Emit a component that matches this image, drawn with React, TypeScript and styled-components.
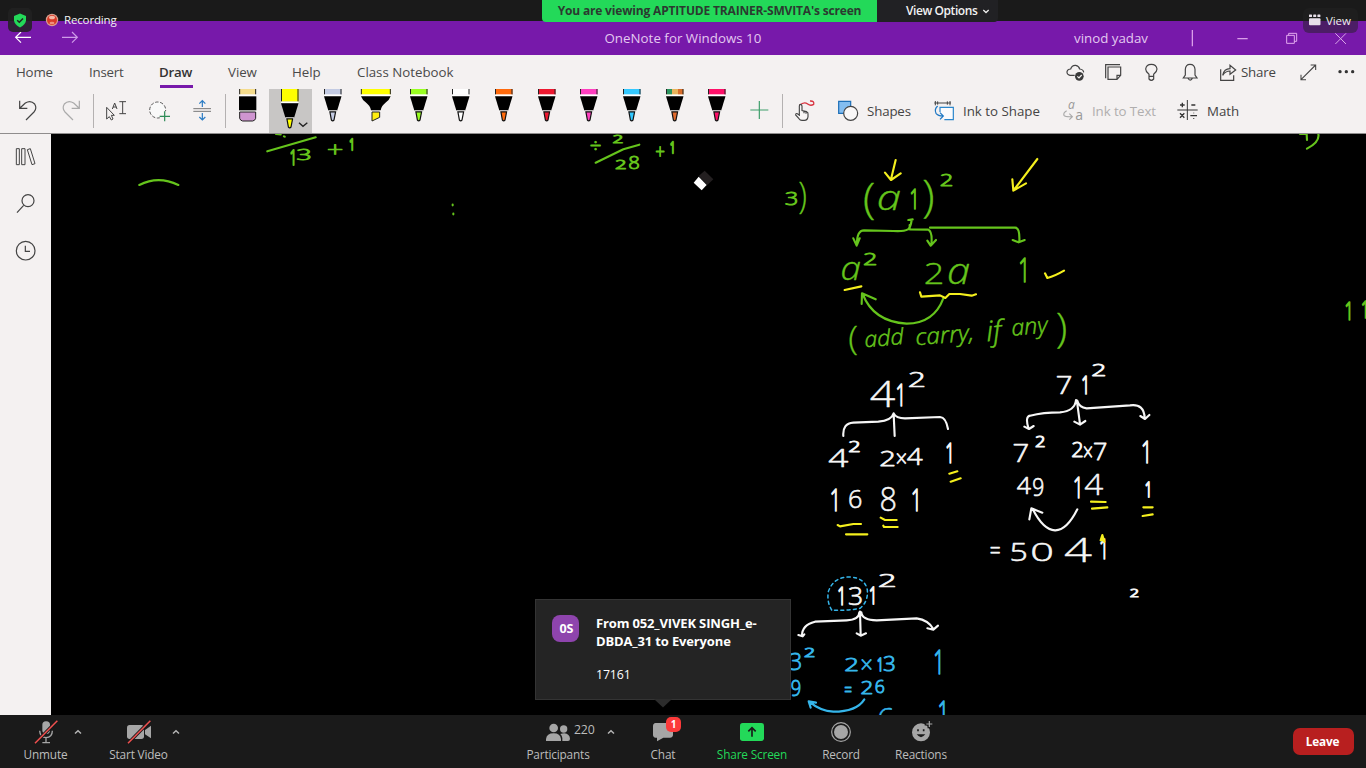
import React from 'react';
import styled, { createGlobalStyle } from 'styled-components';

const Global = createGlobalStyle`
  * { box-sizing: border-box; }
  body { margin: 0; background: #000; font-family: "Open Sans", "Noto Sans", sans-serif; }
  svg { display: block; flex: none; }
`;

const Screen = styled.div`
  position: relative;
  width: 1366px;
  height: 768px;
  overflow: hidden;
  display: flex;
  flex-direction: column;
  background: #000;
`;

/* ---------- shared pieces ---------- */

const Text = styled.span<{ $size?: number; $ls?: number; $color?: string; $weight?: number; $ml?: number; $w?: number }>`
  flex: none;
  white-space: nowrap;
  font-size: ${p => p.$size ?? 13.3}px;
  letter-spacing: ${p => p.$ls ?? 0}px;
  color: ${p => p.$color ?? '#444'};
  font-weight: ${p => p.$weight ?? 400};
  margin-left: ${p => p.$ml ?? 0}px;
  width: ${p => (p.$w ? `${p.$w}px` : 'auto')};
`;

const Pic = styled.svg<{ $ml?: number }>`
  margin-left: ${p => p.$ml ?? 0}px;
  fill: none;
  stroke: #444;
  stroke-width: 3.6;
`;

type DrawingProps = {
  x: number; y: number; w: number; h: number; ox?: number; ml?: number; stroke?: string;
  children?: React.ReactNode;
};

/* Icons are drawn on a grid of thirds of a pixel. */
const Drawing = ({ x, y, w, h, ox = 0, ml, stroke, children }: DrawingProps) => (
  <Pic $ml={ml} width={w} height={h} viewBox={`${(x - ox) * 3} ${y * 3} ${w * 3} ${h * 3}`} style={stroke ? { stroke } : undefined}>
    {children}
  </Pic>
);

/* ---------- top bars ---------- */

const MeetingStrip = styled.div`
  flex: none;
  height: 21px;
  background: #1a1a1a;
`;

const Banner = styled.div`
  position: absolute;
  top: 0;
  left: 542px;
  height: 22px;
  display: flex;
  border-radius: 0 0 4px 4px;
  overflow: hidden;
`;

const BannerMessage = styled.div`
  width: 335px;
  background: #23d959;
  color: #2b3a30;
  font-size: 12px;
  font-weight: 700;
  line-height: 21px;
  text-align: center;
  white-space: nowrap;
  letter-spacing: -0.17px;
`;

const BannerOptions = styled.div`
  width: 121px;
  background: #212124;
  color: #f2f2f2;
  font-size: 12px;
  font-weight: 600;
  line-height: 21px;
  display: flex;
  align-items: center;
  padding: 0 0 1px 29px;
  letter-spacing: -0.42px;
  white-space: nowrap;
`;

const ShieldBadge = styled.div`
  position: absolute;
  left: 8px;
  top: 8px;
  width: 24px;
  height: 24px;
  border-radius: 5px;
  background: rgba(34, 34, 34, 0.86);
  display: flex;
  align-items: center;
  justify-content: center;
`;

const Recording = styled.div`
  position: absolute;
  left: 45px;
  top: 12px;
  height: 16px;
  display: flex;
  align-items: center;
  gap: 5px;
  color: #f3f3f3;
  font-size: 11.5px;
  letter-spacing: -0.15px;
  line-height: 16px;
`;

const ViewBadge = styled.div`
  position: absolute;
  left: 1303px;
  top: 8px;
  width: 55px;
  height: 25px;
  border-radius: 6px;
  background: rgba(34, 34, 34, 0.5);
  display: flex;
  align-items: center;
  padding: 0 0 1px 6px;
  gap: 5px;
  color: #eee;
  font-size: 11.5px;
  letter-spacing: -0.1px;
`;

const TitleBar = styled.div`
  flex: none;
  height: 34px;
  background: #7719aa;
  display: flex;
  align-items: center;
`;

const TabRow = styled.div`
  flex: none;
  height: 34px;
  padding-left: 16px;
  background: #f4f1f1;
  display: flex;
  align-items: center;
`;

const Tab = styled.div<{ $w: number; $active?: boolean; $ls?: number }>`
  flex: none;
  height: 34px;
  width: ${p => p.$w}px;
  line-height: 34px;
  font-size: 13.3px;
  letter-spacing: ${p => p.$ls ?? -0.2}px;
  white-space: nowrap;
  color: ${p => (p.$active ? '#333' : '#4a4a4a')};
  font-weight: ${p => (p.$active ? 600 : 400)};
  background: ${p => (p.$active ? 'linear-gradient(#7719aa, #7719aa) 1px 30px / 33px 3px no-repeat' : 'none')};
`;

const Ribbon = styled.div`
  flex: none;
  height: 45px;
  background: #f4f1f1;
  border-bottom: 1px solid #8f8d8d;
  display: flex;
  align-items: center;
`;

const Divider = styled.div<{ $ml: number }>`
  flex: none;
  width: 1px;
  height: 34px;
  margin-left: ${p => p.$ml}px;
  background: #b4b1b1;
`;

const SelectedPen = styled.div`
  flex: none;
  width: 43px;
  height: 44px;
  margin-left: 11px;
  padding-left: 12px;
  background: #c8c6c5;
  display: flex;
`;

const PenTray = styled.div`
  flex: none;
  width: 317px;
  margin-left: 18.500px;
  margin-right: 0.500px;
  display: flex;
  justify-content: space-between;
`;

type PenProps = { color: string; tip?: string; drop?: number; ml?: number; children?: React.ReactNode };

const Pen = ({ color, tip, drop = 0, ml, children }: PenProps) => (
  <Pic $ml={ml} width={18} height={44} viewBox="0 0 18 44" style={{ stroke: 'none' }}>
    <rect x="0" y="0" width="17.5" height={5.5 + drop} fill={color} />
    {children}
    <path d={`M.5 0V${5.5 + drop}M17 0V${5.5 + drop}`} stroke="#222" strokeWidth="1" />
    <rect x="0" y={5.6 + drop} width="17.5" height="1.4" fill="#fff" />
    <g transform={`translate(0 ${drop})`}>
      <path d="M0 7.2H17.5L13.2 21.4H4.3Z" fill="#000" />
      <path d="M4.5 21.5H13V22.5H4.5Z" fill="#fff" />
      <path d="M5.9 22.8L7.4 31Q8.7 32.6 10 31L11.6 22.8Z" fill={tip ?? color} stroke="#111" strokeWidth="1.2" />
    </g>
  </Pic>
);

/* ---------- note area ---------- */

const Body = styled.div`
  flex: none;
  height: 581px;
  display: flex;
`;

const SideRail = styled.div`
  flex: none;
  width: 51px;
  background: #f4f1f1;
  display: flex;
  flex-direction: column;
  align-items: flex-start;
  padding: 10px 0 0 13px;
  gap: 21px;
`;

const Page = styled.svg`
  background: #000;
  overflow: hidden;
  font-family: "Open Sans", "Noto Sans", sans-serif;
  font-weight: 300;
`;

const Stroke = styled.path`
  fill: none;
  stroke-width: 6.4;
  stroke-linecap: round;
  stroke-linejoin: round;
`;

const GREEN = '#65c41c';
const YELLOW = '#f4ef1d';
const WHITE = '#f6f6f6';
const CYAN = '#35b5ea';

/* Ink box of each character in em: left, width, bottom, height. */
const METRICS: Record<string, [number, number, number, number]> = {
  '(': [0.05, 0.25, -0.16, 0.88],
  ')': [0.03, 0.25, -0.16, 0.88],
  '×': [0.09, 0.42, 0.16, 0.4],
  '+': [0.05, 0.49, 0.12, 0.47],
  '÷': [0.05, 0.49, 0.12, 0.47],
  '=': [0.05, 0.49, 0.24, 0.24],
  a: [0.05, 0.48, 0, 0.54],
  '1': [0.1, 0.25, 0, 0.714],
  '4': [0.02, 0.55, 0, 0.714],
};
const DIGIT: [number, number, number, number] = [0.05, 0.49, 0, 0.714];

type InkCharProps = { c: string; x: number; y: number; r: number; b: number; ink: string };

const InkChar = ({ c, x, y, r, b, ink }: InkCharProps) => {
  const [l, w, base, h] = METRICS[c] ?? DIGIT;
  const size = (b - y) / h;
  const bar = c === '1';
  const sx = bar ? 0.62 : (r - x) / (w * size);
  const left = bar ? r - w * size * sx : x;
  const pen = c === '(' || c === ')' ? 0.3 : Math.max(0.45, (6.2 - 0.055 * size) / 3) + (bar ? 0.7 : 0);
  return (
    <text
      transform={`translate(${left} ${b + base * size}) scale(${sx} 1) translate(${-l * size} 0)`}
      fontSize={size}
      fontStyle={c === 'a' ? 'italic' : 'normal'}
      fill={ink}
      stroke={ink}
      strokeWidth={pen}
      strokeLinejoin="round"
      vectorEffect="non-scaling-stroke"
    >
      {c}
    </text>
  );
};

type Mark = [string, number, number, number, number];
const Ink = ({ marks, ink }: { marks: Mark[]; ink: string }) => (
  <>
    {marks.map(([c, x, y, r, b], i) => (
      <InkChar key={i} c={c} x={x} y={y} r={r} b={b} ink={ink} />
    ))}
  </>
);

const Sheet = ({ x, y, children }: { x: number; y: number; children: React.ReactNode }) => (
  <g transform={`translate(${x} ${y}) scale(${1 / 3})`}>{children}</g>
);

const Cursive = ({ x, y, w, size, children }: { x: number; y: number; w: number; size: number; children: string }) => (
  <text
    transform={`translate(${x} ${y}) rotate(-5)`}
    fontSize={size}
    fontStyle="italic"
    textLength={w}
    lengthAdjust="spacingAndGlyphs"
    fill={GREEN}
    stroke={GREEN}
    strokeWidth="1.4"
  >
    {children}
  </text>
);

const Handwriting = () => (
  <Page width="1315" height="581" viewBox="51 134 1315 581">
    <Sheet x={0} y={130}>
      <Stroke stroke={GREEN} d="M802 64L947 22M828 12L842 13M852 19L854 20M418 165Q475 136 535 165M1358 224V226M1360 251V253" />
      <Ink ink={GREEN} marks={[['1', 868, 63, 882, 105], ['3', 893, 57, 933, 90], ['+', 985, 42, 1028, 72], ['1', 1043, 27, 1058, 60]]} />
    </Sheet>
    <Sheet x={570} y={130}>
      <Stroke stroke={GREEN} d="M77 98L160 58L208 44" />
      <Ink ink={GREEN} marks={[['÷', 62, 33, 92, 62], ['2', 130, 15, 158, 38], ['2', 138, 88, 168, 117], ['8', 178, 77, 208, 117], ['+', 258, 50, 283, 80], ['1', 298, 38, 310, 70]]} />
      <path d="M386 138L404 122L430 148L412 165Z" fill="#231f20" />
      <path d="M386 140L410 165L395 181L371 158Z" fill="#fff" />
    </Sheet>
    <Sheet x={1060} y={0}>
      <Stroke stroke={GREEN} d="M720 402H740L741 420M775 402Q780 426 741 446" />
    </Sheet>
    <Sheet x={1240} y={280}>
      <Ink ink={GREEN} marks={[['1', 316, 65, 330, 120], ['1', 365, 62, 379, 114]]} />
    </Sheet>

    <Sheet x={760} y={150}>
      <Ink
        ink={GREEN}
        marks={[
          ['3', 78, 125, 113, 166], [')', 118, 95, 142, 190],
          ['(', 315, 98, 350, 208], ['a', 357, 122, 420, 180], ['1', 455, 118, 467, 178], [')', 490, 90, 525, 208], ['2', 543, 72, 578, 107],
          ['a', 247, 336, 300, 390], ['2', 313, 310, 350, 345],
          ['2', 497, 340, 550, 403], ['a', 567, 341, 627, 401], ['1', 775, 325, 797, 397],
          ['(', 270, 530, 297, 615], [')', 891, 488, 923, 595],
        ]}
      />
      <Cursive x={315} y={592} w={118} size={66}>add</Cursive>
      <Cursive x={468} y={586} w={176} size={68}>carry,</Cursive>
      <Cursive x={681} y={574} w={46} size={84}>if</Cursive>
      <Cursive x={756} y={557} w={108} size={68}>any</Cursive>
      <Stroke
        stroke={GREEN}
        d="M445 210L458 208M455 210Q452 232 444 238Q432 245 400 243L312 241Q290 241 291 285M280 265L290 287L299 265M449 225L449 238L505 239Q518 245 514 285M502 272L512 287L528 270M510 233H765Q780 232 778 275M758 270L776 277L794 270M550 445Q522 520 440 521Q340 515 308 432M305 462L306 430L347 448"
      />
      <Stroke
        stroke={YELLOW}
        d="M407 30L393 88M375 68L393 90L422 70M832 27L760 122M757 88L760 122L798 100M855 370L862 384Q885 378 912 362M254 420L304 409M480 427L484 440L540 436L556 444L568 432L600 432L635 437L648 433"
      />
    </Sheet>

    <Sheet x={810} y={355}>
      <Ink
        ink={WHITE}
        marks={[
          ['4', 182, 78, 256, 156], ['1', 262, 88, 276, 153], ['2', 298, 52, 345, 95],
          ['4', 57, 280, 115, 335], ['2', 118, 258, 150, 290],
          ['2', 212, 288, 255, 333], ['×', 262, 294, 288, 323], ['4', 292, 278, 338, 330], ['1', 408, 268, 423, 325],
          ['1', 67, 400, 80, 468], ['6', 118, 402, 155, 458], ['8', 213, 395, 258, 467], ['1', 310, 402, 323, 467],
          ['7', 742, 65, 785, 118], ['1', 815, 65, 830, 118], ['2', 848, 27, 887, 63],
          ['7', 612, 268, 655, 322], ['2', 678, 243, 705, 275],
          ['2', 787, 263, 819, 305], ['×', 823, 275, 846, 305], ['7', 853, 265, 890, 315], ['1', 1000, 255, 1014, 323],
          ['4', 622, 366, 663, 418], ['9', 670, 368, 701, 422], ['1', 793, 367, 808, 430], ['4', 825, 357, 880, 420], ['1', 1005, 380, 1018, 425],
          ['=', 542, 573, 570, 592], ['5', 603, 562, 650, 618], ['0', 667, 563, 728, 618], ['4', 765, 550, 846, 622], ['1', 868, 553, 885, 613],
        ]}
      />
      <Stroke
        stroke={WHITE}
        d="M100 243Q97 205 130 203L205 200Q245 197 251 175Q258 190 285 190L390 186Q408 187 414 222M251 178L254 243M655 218Q645 185 660 182Q700 172 750 172Q795 168 798 135M802 137Q807 157 830 160L960 151Q1003 145 1004 190M801 140L810 207M793 200L810 209L826 198M643 215L657 222L671 213M991 183L1005 192L1018 180M802 463Q770 527 735 526Q700 525 668 462M658 493L664 460L697 473"
      />
      <Stroke
        stroke={YELLOW}
        d="M418 356L442 349M422 380L452 370M83 510L90 514L130 507H153M108 538H172M212 488L225 495H260M220 512L222 516H263M843 440L887 441M846 461L892 457M1000 457H1028M998 483L1028 478M872 556L877 540L883 560M877 545V556"
      />
    </Sheet>

    <Sheet x={780} y={565}>
      <Ink
        ink={WHITE}
        marks={[['1', 172, 67, 188, 121], ['3', 208, 68, 247, 121], ['1', 268, 68, 282, 117], ['2', 298, 28, 347, 66], ['2', 1052, 73, 1076, 97]]}
      />
      <Stroke
        stroke={WHITE}
        d="M66 213Q65 180 105 170L200 166Q238 165 238 142M244 142Q246 165 290 166L410 160Q445 165 460 192M240 140L242 210M230 205L242 212L258 205M55 210L68 214L73 208M442 190L460 194L474 182"
      />
      <Ink
        ink={CYAN}
        marks={[
          ['3', 30, 265, 65, 315], ['2', 75, 248, 104, 275],
          ['2', 197, 278, 235, 317], ['×', 247, 284, 275, 313], ['1', 288, 278, 303, 317], ['3', 312, 275, 345, 317], ['1', 462, 258, 481, 327],
          ['9', 35, 345, 62, 392], ['=', 195, 365, 215, 381], ['2', 245, 350, 278, 388], ['6', 287, 343, 313, 384],
          ['6', 295, 430, 342, 496], ['1', 478, 410, 494, 480],
        ]}
      />
      <Stroke stroke={CYAN} d="M253 403Q230 440 160 440Q120 438 88 410M92 428L86 409L108 413" />
      <Stroke stroke={CYAN} style={{ strokeWidth: 4.5 }} strokeDasharray="9 10" d="M155 135Q140 110 145 80Q160 36 208 36Q255 38 262 75Q265 110 240 130Q200 138 155 135" />
    </Sheet>
  </Page>
);

/* ---------- meeting controls ---------- */

const ControlBar = styled.div`
  flex: none;
  height: 53px;
  background: #1a1a1a;
  display: flex;
  align-items: flex-start;
`;

const Control = styled.div<{ $ml: number; $w: number; $color?: string }>`
  flex: none;
  width: ${p => p.$w}px;
  margin-left: ${p => p.$ml}px;
  padding-top: 3px;
  display: flex;
  flex-direction: column;
  align-items: center;
  font-size: 11.8px;
  letter-spacing: -0.16px;
  line-height: 18px;
  white-space: nowrap;
  color: ${p => p.$color ?? '#bdbdbd'};
`;

const ControlTop = styled.div<{ $shift?: number }>`
  position: relative;
  height: 28px;
  margin-left: ${p => p.$shift ?? 0}px;
  margin-bottom: -1px;
  display: flex;
  justify-content: center;
`;

const Count = styled.span`
  width: 26px;
  padding-left: 2px;
  line-height: 23px;
  font-size: 12.3px;
`;

const Badge = styled.div`
  position: absolute;
  left: 15px;
  top: -1px;
  width: 15px;
  height: 15px;
  border-radius: 5px;
  background: #fc3a3a;
  color: #fff;
  font-size: 10px;
  font-weight: 700;
  line-height: 15px;
  text-align: center;
`;

const LeaveButton = styled.div`
  margin: 13px 12px 0 auto;
  width: 61px;
  height: 27px;
  border-radius: 7px;
  background: #b81f1f;
  color: #fff;
  font-size: 11.8px;
  font-weight: 700;
  line-height: 26px;
  text-align: center;
  padding-right: 2px;
  letter-spacing: -0.2px;
`;

const Caret = ({ ml }: { ml: number }) => (
  <Pic $ml={ml} width={12} height={34} viewBox="0 0 12 34" style={{ stroke: '#b5b5b5', strokeWidth: 1.5 }}>
    <path d="M3 18.5L6 15.7L9 18.5" />
  </Pic>
);

const Toast = styled.div`
  position: absolute;
  left: 535px;
  top: 599px;
  width: 256px;
  height: 101px;
  border: 1px solid #343434;
  background: #242424;
  display: flex;
  padding: 15px 0 0 16px;
  gap: 17px;
  color: #fff;
`;

const ToastTail = styled.svg`
  position: absolute;
  left: 118px;
  top: 99px;
`;

const Avatar = styled.div`
  flex: none;
  width: 27px;
  height: 27px;
  border-radius: 8px;
  background: #8e44ad;
  font-size: 12.5px;
  font-weight: 700;
  line-height: 27px;
  text-align: center;
  padding-left: 2px;
`;

const ToastBody = styled.div`
  font-size: 12.3px;
  line-height: 18px;
  letter-spacing: -0.1px;
`;

const ToastTitle = styled.div`
  width: 180px;
  font-size: 13px;
  font-weight: 700;
  letter-spacing: -0.15px;
  white-space: nowrap;
  margin: -1px 0 16px;
`;

export default function App() {
  return (
    <Screen>
      <Global />
      <MeetingStrip />
      <TitleBar>
        <Drawing x={13} y={28} w={20} h={20} ml={13} stroke="#fff"><path d="M93 112H47M63 96L47 112L63 128" /></Drawing>
        <Drawing x={60} y={28} w={20} h={20} ml={27} stroke="#cf9be8"><path d="M186 112H232M216 96L232 112L216 128" /></Drawing>
        <Text $color="#e3c8f0" $ml={524.5} $w={469.5} $ls={0.03}>OneNote for Windows 10</Text>
        <Text $color="#e3c8f0" $w={109}>vinod yadav</Text>
        <Drawing x={1183} y={21} w={20} h={34} ox={1060} stroke="#e2a9ee"><path d="M397 90V139" /></Drawing>
        <Drawing x={1230} y={21} w={24} h={34} ox={1060} ml={27} stroke="#e2a9ee"><path d="M532 116H563" /></Drawing>
        <Drawing x={1280} y={21} w={24} h={34} ox={1060} ml={26} stroke="#e2a9ee"><path d="M680 106H703V130H680ZM686 106V100H710V124H703" strokeWidth="3" /></Drawing>
        <Drawing x={1330} y={21} w={22} h={34} ox={1060} ml={26} stroke="#d9a5e8"><path d="M826 100L858 132M858 100L826 132" strokeWidth="3" /></Drawing>
      </TitleBar>
      <TabRow>
        <Tab $w={73}>Home</Tab>
        <Tab $w={70}>Insert</Tab>
        <Tab $w={69} $active>Draw</Tab>
        <Tab $w={64} $ls={-0.05}>View</Tab>
        <Tab $w={65} $ls={-0.05}>Help</Tab>
        <Tab $w={706} $ls={0}>Class Notebook</Tab>
        <Drawing x={1063} y={55} w={24} h={34} ox={1060}>
          <path d="M44 226H30Q20 224 21 215Q23 207 32 207Q36 195 47 196Q57 198 59 207Q70 208 71 217" />
          <circle cx="58" cy="229" r="13" fill="#3a3a3a" stroke="none" />
          <path d="M52 229L57 234L65 225" stroke="#f4f1f1" />
        </Drawing>
        <Drawing x={1103} y={55} w={21} h={34} ox={1060} ml={16}>
          <path d="M137 235V194H180M144 201H182V226L171 238H144ZM182 226H171V238" />
        </Drawing>
        <Drawing x={1142} y={55} w={20} h={34} ox={1060} ml={18}>
          <path d="M267 229V223Q257 215 257 207Q259 193 274 193Q289 193 291 207Q291 215 281 223V229ZM267 229V237Q274 245 281 237V229" />
        </Drawing>
        <Drawing x={1180} y={55} w={20} h={34} ox={1060} ml={18}>
          <path d="M370 234H411L405 225V208Q404 193 390 193Q377 193 376 208V225ZM384 235Q390 246 397 235" />
        </Drawing>
        <Drawing x={1218} y={55} w={20} h={34} ox={1060} ml={18}>
          <path d="M482 208V241H521V226M488 226Q492 206 510 206V196L527 210L510 223V213Q496 213 488 226Z" />
        </Drawing>
        <Text $ml={3} $w={55} $ls={-0.2}>Share</Text>
        <Drawing x={1297} y={55} w={22} h={34} ox={1060} ml={1}>
          <path d="M723 239L767 195M752 195H767V210M723 224V239H738" strokeWidth="3.2" />
        </Drawing>
        <Drawing x={1336} y={55} w={22} h={34} ox={1060} ml={17} stroke="none">
          <g fill="#333"><circle cx="840" cy="215" r="5" /><circle cx="859" cy="215" r="5" /><circle cx="878" cy="215" r="5" /></g>
        </Drawing>
      </TabRow>
      <Ribbon>
        <Drawing x={14} y={89} w={28} h={44} ml={14}><path d="M59 302V325H82M60 324L76 309Q92 299 104 312Q112 325 102 336L78 360" /></Drawing>
        <Drawing x={58} y={89} w={26} h={44} ml={16} stroke="#aaa"><path d="M238 302V325H215M237 324L221 309Q205 299 193 312Q185 325 195 336L219 360" /></Drawing>
        <Divider $ml={9} />
        <Drawing x={102} y={89} w={28} h={44} ml={8}>
          <path d="M320 322V357L328 350L334 360L339 357L334 346H343ZM337 327L344 309L351 327M339 321H349M358 305H378M368 305V341M358 341H378" strokeWidth="3" />
        </Drawing>
        <Drawing x={146} y={89} w={28} h={44} ml={16}>
          <circle cx="473" cy="330" r="24" fill="#f9f9f9" strokeDasharray="10 5" stroke="#555" strokeWidth="3" />
          <path d="M494 334V364M479 349H510" stroke="#f4f1f1" strokeWidth="10" />
          <path d="M494 334V364M479 349H510" stroke="#2e8b57" />
        </Drawing>
        <Drawing x={190} y={89} w={24} h={44} ml={16}>
          <path d="M580 326H633M580 334H633" stroke="#777" strokeWidth="3" />
          <path d="M607 321V303M598 311L607 302L616 311M607 339V359M598 351L607 360L616 351" stroke="#2b7cc4" />
        </Drawing>
        <Divider $ml={11} />
        <Drawing x={238} y={89} w={20} h={44} ml={12} stroke="none">
          <path d="M718 267H768V283H718Z" fill="#f5dc8c" />
          <path d="M719 267V283M767 267V283" stroke="#222" strokeWidth="3" />
          <path d="M717 284H769V287H717ZM717 331H769V335H717Z" fill="#fff" />
          <path d="M717 289H769V331H717Z" fill="#000" />
          <path d="M719 336H767V355Q765 362 758 363H728Q721 362 719 355Z" fill="#cf95d0" stroke="#222" strokeWidth="3" />
        </Drawing>
        <SelectedPen>
          <Pen color="#ffff00" drop={7} />
          <Drawing x={297} y={89} w={14} h={44} ml={-2} stroke="#222"><path d="M897 368L909 379L922 368" strokeWidth="4" /></Drawing>
        </SelectedPen>
        <Pen color="#c3cbe3" ml={12} />
        <Drawing x={360} y={89} w={31} h={44} ml={18} stroke="none">
          <path d="M1083 267H1172V283H1083Z" fill="#ffff00" />
          <path d="M1084 267V283M1171 267V283" stroke="#222" strokeWidth="3" />
          <path d="M1083 284H1172V288H1083Z" fill="#fff" />
          <path d="M1083 289H1172Q1168 300 1158 307Q1144 318 1142 331H1113Q1111 318 1097 307Q1087 300 1083 289Z" fill="#000" />
          <path d="M1116 336H1139V352L1116 363Z" fill="#ffee10" stroke="#222" strokeWidth="3" />
        </Drawing>
        <PenTray>
          <Pen color="#99ff22" />
          <Pen color="#ffffff" />
          <Pen color="#ff6a0c" />
          <Pen color="#ee1830" />
          <Pen color="#ff3fc0" />
          <Pen color="#33c8ff" />
          <Pen color="#e9b45c" tip="#e06a2c">
            <rect x="1" y="0" width="5" height="5.5" fill="#2c9560" />
            <rect x="12" y="0" width="5" height="5.5" fill="#d96d2a" />
          </Pen>
          <Pen color="#ff1069" />
        </PenTray>
        <Drawing x={747} y={89} w={24} h={44} ox={380} ml={20} stroke="#3f9f6c"><path d="M1138 303V357M1111 330H1165" /></Drawing>
        <Divider $ml={11} />
        <Drawing x={793} y={89} w={24} h={44} ox={760} ml={10}>
          <path d="M119 316Q132 304 143 312Q152 319 161 313Q164 302 150 303" stroke="#d8323f" strokeWidth="4" />
          <path d="M118 348V318Q118 313 122 313Q126 314 126 319V332L140 335Q145 337 144 342V350Q143 361 133 361H126Q120 361 117 356L107 345Q107 339 112 341L118 345M132 334V340M138 335V341" fill="#f8f6f6" strokeWidth="3.4" />
        </Drawing>
        <Drawing x={836} y={89} w={24} h={44} ox={760} ml={19}>
          <path d="M236 304H272V340H236Z" fill="#83bdf0" stroke="#1d6fb8" />
          <circle cx="272" cy="340" r="21" fill="#f9f7f7" />
        </Drawing>
        <Text $ml={7} $w={48} $ls={-0.15}>Shapes</Text>
        <Drawing x={932} y={89} w={24} h={44} ox={760} ml={17}>
          <path d="M526 303V316M570 303V316M523 309H573M533 304V314M562 304V314" strokeWidth="3" />
          <path d="M540 336V322H580V359H553" stroke="#2b86cc" fill="#fbfbfd" />
          <path d="M533 318Q522 328 528 340Q534 348 549 348M540 338L550 348L540 358" stroke="#1d77c4" />
        </Drawing>
        <Text $ml={7} $w={80}>Ink to Shape</Text>
        <Drawing x={1061} y={89} w={24} h={44} ox={1060} ml={18} stroke="#aaa">
          <text x="24" y="326" fontSize="36" fontStyle="italic" fill="#999" stroke="none">a</text>
          <text x="46" y="360" fontSize="42" fill="#999" stroke="none">a</text>
          <path d="M20 332Q9 338 12 346Q16 351 36 350M28 341L37 350L28 359" />
        </Drawing>
        <Text $ml={7} $w={66} $color="#b0aeae" $ls={-0.1}>Ink to Text</Text>
        <Drawing x={1175} y={89} w={24} h={44} ox={1060} ml={17} stroke="#333">
          <path d="M382 300V360M352 330H413" strokeWidth="3" />
          <path d="M360 315H374M367 308V322M394 315H406M360 340L373 353M373 340L360 353M391 347H411M401 338V340M401 354V356" strokeWidth="4" />
        </Drawing>
        <Text $ml={8}>Math</Text>
      </Ribbon>
      <Body>
        <SideRail>
          <Drawing x={13} y={144} w={26} h={26}>
            <path d="M49 446H58V494H49ZM65 446H75V494H65ZM82 449L91 446L105 491L96 494Z" strokeWidth="3" />
          </Drawing>
          <Drawing x={13} y={191} w={26} h={26}><circle cx="84" cy="602" r="18" /><path d="M71 616L51 638" /></Drawing>
          <Drawing x={13} y={238} w={26} h={26}><circle cx="77" cy="752" r="28" /><path d="M76 737V754H90" /></Drawing>
        </SideRail>
        <Handwriting />
      </Body>
      <ControlBar>
        <Control $ml={15.5} $w={60}>
          <ControlTop>
            <Drawing x={32} y={718} w={28} h={28} stroke="#a6a6a6">
              <rect x="127" y="2164" width="23" height="38" rx="11" fill="#a6a6a6" stroke="none" />
              <path d="M119 2192Q120 2212 138 2213Q157 2212 157 2192M138 2213V2228M127 2228H150" strokeWidth="4" />
              <path d="M105 2230L172 2162" stroke="#1a1a1a" strokeWidth="10" />
              <path d="M105 2230L172 2162" stroke="#f0504f" strokeWidth="4.5" />
            </Drawing>
          </ControlTop>
          Unmute
        </Control>
        <Caret ml={-3.5} />
        <Control $ml={15.5} $w={78}>
          <ControlTop>
            <Drawing x={125} y={718} w={28} h={28} stroke="#a6a6a6">
              <rect x="381" y="2175" width="51" height="42" rx="8" fill="#a6a6a6" stroke="none" />
              <path d="M435 2190L453 2177V2215L435 2203Z" fill="#a6a6a6" stroke="none" />
              <path d="M384 2230L451 2162" stroke="#1a1a1a" strokeWidth="10" />
              <path d="M384 2230L451 2162" stroke="#f0504f" strokeWidth="4.5" />
            </Drawing>
          </ControlTop>
          Start Video
        </Control>
        <Caret ml={-7.5} />
        <Control $ml={336} $w={80}>
          <ControlTop $shift={27}>
            <Drawing x={545} y={718} w={27} h={28} ox={520} stroke="none">
              <g transform="translate(0 1770)" fill="#a6a6a6">
                <circle cx="101" cy="414" r="13" /><path d="M78 453V447Q80 430 101 430Q121 430 123 447V453Z" />
                <circle cx="131" cy="417" r="11" /><path d="M127 453V444Q126 436 121 432Q127 430 133 430Q149 432 150 446Q150 453 144 453Z" />
              </g>
            </Drawing>
            <Count>220</Count>
          </ControlTop>
          Participants
        </Control>
        <Caret ml={7} />
        <Control $ml={16} $w={60}>
          <ControlTop>
            <Drawing x={651} y={718} w={24} h={28} ox={520} stroke="none">
              <path transform="translate(0 1770)" d="M407 399H451Q459 400 459 408V434Q459 442 450 443H430L411 454V443H407Q399 442 399 434V408Q399 400 407 399Z" fill="#a6a6a6" />
            </Drawing>
            <Badge>1</Badge>
          </ControlTop>
          Chat
        </Control>
        <Control $ml={19} $w={80} $color="#23d959">
          <ControlTop>
            <Drawing x={739} y={718} w={26} h={28} ox={520} stroke="#1a1a1a">
              <g transform="translate(0 1770)">
                <rect x="660" y="399" width="72" height="54" rx="8" fill="#23d959" stroke="none" />
                <path d="M696 440V415M685 424L696 413L707 424" strokeWidth="5" />
              </g>
            </Drawing>
          </ControlTop>
          Share Screen
        </Control>
        <Control $ml={19} $w={60}>
          <ControlTop>
            <Drawing x={829} y={718} w={24} h={28} ox={520} stroke="#a6a6a6">
              <circle cx="963" cy="2196" r="28" /><circle cx="963" cy="2196" r="21" fill="#a6a6a6" stroke="none" />
            </Drawing>
          </ControlTop>
          Record
        </Control>
        <Control $ml={15} $w={70}>
          <ControlTop>
            <Drawing x={908} y={718} w={26} h={28} ox={520} stroke="#1a1a1a">
              <g transform="translate(0 1770)">
                <circle cx="1203" cy="427" r="27" fill="#a6a6a6" stroke="none" />
                <path d="M1227 390V415M1214 402H1240" stroke="#1a1a1a" strokeWidth="9" />
                <path d="M1228 393V411M1219 402H1237" stroke="#a6a6a6" />
                <path d="M1190 433Q1203 450 1216 433Z" fill="#1a1a1a" stroke="none" />
                <path d="M1194 418V424M1211 418V424" strokeWidth="5" />
              </g>
            </Drawing>
          </ControlTop>
          Reactions
        </Control>
        <LeaveButton>Leave</LeaveButton>
      </ControlBar>

      <Banner>
        <BannerMessage>You are viewing APTITUDE TRAINER-SMVITA's screen</BannerMessage>
        <BannerOptions>
          View Options
          <Pic $ml={5} width={8} height={8} viewBox="0 0 8 8" style={{ stroke: '#eee', strokeWidth: 1.3 }}><path d="M1.3 3L4 5.5L6.7 3" /></Pic>
        </BannerOptions>
      </Banner>
      <ShieldBadge>
        <svg width="14" height="15" viewBox="0 0 14 15"><path d="M7 .5L13 3V7.5Q12.5 11.5 7 14.5Q1.5 11.5 1 7.5V3Z" fill="#23d959" /><path d="M4.2 7.3L6.3 9.3L10 5.5" fill="none" stroke="#222" strokeWidth="1.5" /></svg>
      </ShieldBadge>
      <Recording>
        <svg width="14" height="14" viewBox="0 0 14 14">
          <circle cx="7" cy="7" r="6.2" fill="#d9a08e" /><circle cx="7" cy="7" r="5" fill="#d93a27" /><ellipse cx="7" cy="4.5" rx="3" ry="1.8" fill="#f4b8a6" /><ellipse cx="7" cy="10" rx="2.5" ry="1.2" fill="#f0907c" />
        </svg>
        Recording
      </Recording>
      <ViewBadge>
        <svg width="12" height="12" viewBox="0 0 12 12" fill="#e8e0ea"><rect x="0" y="4.2" width="11.5" height="7" rx="1" /><rect x="0" y=".5" width="3" height="2.6" rx=".6" /><rect x="4.2" y=".5" width="3" height="2.6" rx=".6" /><rect x="8.4" y=".5" width="3" height="2.6" rx=".6" /></svg>
        View
      </ViewBadge>
      <Toast>
        <Avatar>0S</Avatar>
        <ToastBody>
          <ToastTitle>From 052_VIVEK SINGH_e-<br />DBDA_31 to Everyone</ToastTitle>
          17161
        </ToastBody>
        <ToastTail width="18" height="9" viewBox="0 0 18 9"><path d="M0 0H18L9 8.5Z" fill="#2c2c2c" /></ToastTail>
      </Toast>
    </Screen>
  );
}
